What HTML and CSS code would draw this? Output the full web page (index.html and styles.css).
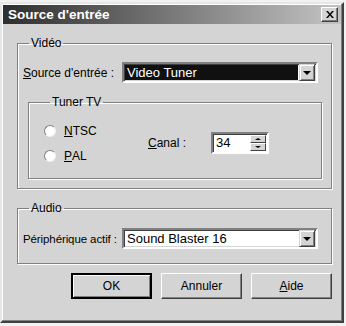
FILE: index.html
```html
<!DOCTYPE html>
<html lang="fr">
<head>
  <meta charset="UTF-8">
  <title>Source d'entrée</title>
  <link rel="stylesheet" href="styles.css">
</head>
<body>
  <div class="window">
    <div class="titlebar">
      <span class="title">Source d'entrée</span>
      <span class="close">
        <svg width="8" height="7" viewBox="0 0 8 7"><path d="M0 0h2l2 2.5L6 0h2L5 3.5 8 7H6L4 4.5 2 7H0l3-3.5z" fill="#000"/></svg>
      </span>
    </div>
    <div class="content">
      <fieldset class="group video">
        <legend>Vidéo</legend>
        <div class="row">
          <label class="lbl"><u>S</u>ource d'entrée :</label>
          <div class="combo">
            <span class="combo-text selected">Video Tuner</span>
            <span class="drop"><i class="arrow"></i></span>
          </div>
        </div>
        <fieldset class="group tuner">
          <legend>Tuner TV</legend>
          <div class="tuner-body">
            <div class="radios">
              <div class="radio"><span class="dot"></span><u>N</u>TSC</div>
              <div class="radio"><span class="dot"></span><u>P</u>AL</div>
            </div>
            <label class="canal"><u>C</u>anal :</label>
            <div class="spin">
              <span class="spin-text">34</span>
              <span class="spin-btns">
                <span class="sbtn"><i class="up"></i></span>
                <span class="sbtn"><i class="down"></i></span>
              </span>
            </div>
          </div>
        </fieldset>
      </fieldset>

      <fieldset class="group audio">
        <legend>Audio</legend>
        <div class="row">
          <label class="lbl">Périphérique actif :</label>
          <div class="combo">
            <span class="combo-text">Sound Blaster 16</span>
            <span class="drop"><i class="arrow"></i></span>
          </div>
        </div>
      </fieldset>

      <div class="buttons">
        <button class="btn default">OK</button>
        <button class="btn">Annuler</button>
        <button class="btn"><u>A</u>ide</button>
      </div>
    </div>
  </div>
</body>
</html>
```

FILE: styles.css
```css
body { margin: 0; background: #f2f2f2; font-family: "Liberation Sans", Arial, sans-serif; font-size: 12px; color: #000; }
.window { box-sizing: border-box; width: 344px; height: 321px; margin-top: 2px; background: #d4d4d4; border: 2px solid; border-color: #e6e6e6 #404040 #404040 #e6e6e6; box-shadow: inset -1px -1px 0 #808080, inset 1px 1px 0 #fff; }
.titlebar { height: 19px; margin: 1px 1px 0 1px; display: flex; align-items: center; justify-content: space-between; padding: 0 3px 0 5px; background: linear-gradient(to right, #2e2e2e, #c4c4c4); }
.title { color: #fff; font-weight: bold; font-size: 13.5px; }
.close { box-sizing: border-box; width: 17px; height: 15px; display: flex; align-items: center; justify-content: center; background: #d4d4d4; border: 1px solid; border-color: #fff #404040 #404040 #fff; box-shadow: inset -1px -1px 0 #808080; }

.content { padding: 12px 10px 0 15px; }
.group { margin: 0; border: 1px solid #808080; box-shadow: 1px 1px 0 #fff, inset 1px 1px 0 #fff; padding: 12px 9px 9px 5px; }
.group legend { padding: 0 2px; margin-left: 6px; line-height: 14px; }
.row { display: flex; align-items: center; }
.lbl { flex: none; width: 99px; white-space: nowrap; }

.combo { box-sizing: border-box; width: 196px; height: 21px; display: flex; align-items: center; background: #fff; border: 2px solid; border-color: #808080 #fff #fff #808080; box-shadow: inset 1px 1px 0 #404040, inset -1px -1px 0 #d4d4d4; padding: 1px; }
.combo-text { flex: 1; height: 15px; line-height: 15px; padding-left: 2px; font-size: 13px; }
.combo-text.selected { background: #101010; color: #fff; margin-right: 1px; }
.drop { box-sizing: border-box; width: 16px; height: 17px; display: flex; align-items: center; justify-content: center; background: #d4d4d4; border: 1px solid; border-color: #d4d4d4 #404040 #404040 #d4d4d4; box-shadow: inset 1px 1px 0 #fff, inset -1px -1px 0 #808080; }
.arrow { width: 0; height: 0; border-left: 4px solid transparent; border-right: 4px solid transparent; border-top: 4px solid #000; }

.tuner { margin-top: 12px; margin-left: 5px; padding: 9px 10px 10px 15px; }
.tuner-body { display: flex; align-items: center; }
.radios { width: 104px; }
.radio { height: 25px; display: flex; align-items: center; }
.dot { box-sizing: border-box; width: 12px; height: 12px; margin-right: 8px; border-radius: 50%; background: #fff; border: 1px solid; border-color: #808080 #f0f0f0 #f0f0f0 #808080; }
.canal { width: 63px; }
.spin { box-sizing: border-box; width: 58px; height: 22px; display: flex; background: #fff; border: 2px solid; border-color: #808080 #fff #fff #808080; box-shadow: inset 1px 1px 0 #404040; padding: 1px; }
.spin-text { flex: 1; line-height: 16px; padding-left: 2px; font-size: 13px; }
.spin-btns { display: flex; flex-direction: column; width: 16px; }
.sbtn { box-sizing: border-box; flex: 1; display: flex; align-items: center; justify-content: center; background: #d4d4d4; border: 1px solid; border-color: #fff #404040 #404040 #fff; }
.up { border-left: 3px solid transparent; border-right: 3px solid transparent; border-bottom: 2px solid #000; }
.down { border-left: 3px solid transparent; border-right: 3px solid transparent; border-top: 2px solid #000; }

.audio { margin-top: 12px; padding: 13px 9px 14px 5px; }
.audio .lbl { font-size: 11.5px; letter-spacing: -0.1px; }

.buttons { display: flex; justify-content: flex-end; gap: 9px; margin-top: 9px; }
.btn { box-sizing: border-box; width: 81px; height: 26px; padding: 0; font-family: inherit; font-size: 12px; color: #000; background: #d4d4d4; border: 1px solid; border-color: #fff #404040 #404040 #fff; box-shadow: inset -1px -1px 0 #808080; }
.btn.default { border: 2px solid #000; box-shadow: inset 1px 1px 0 #fff, inset -1px -1px 0 #808080; }
```
